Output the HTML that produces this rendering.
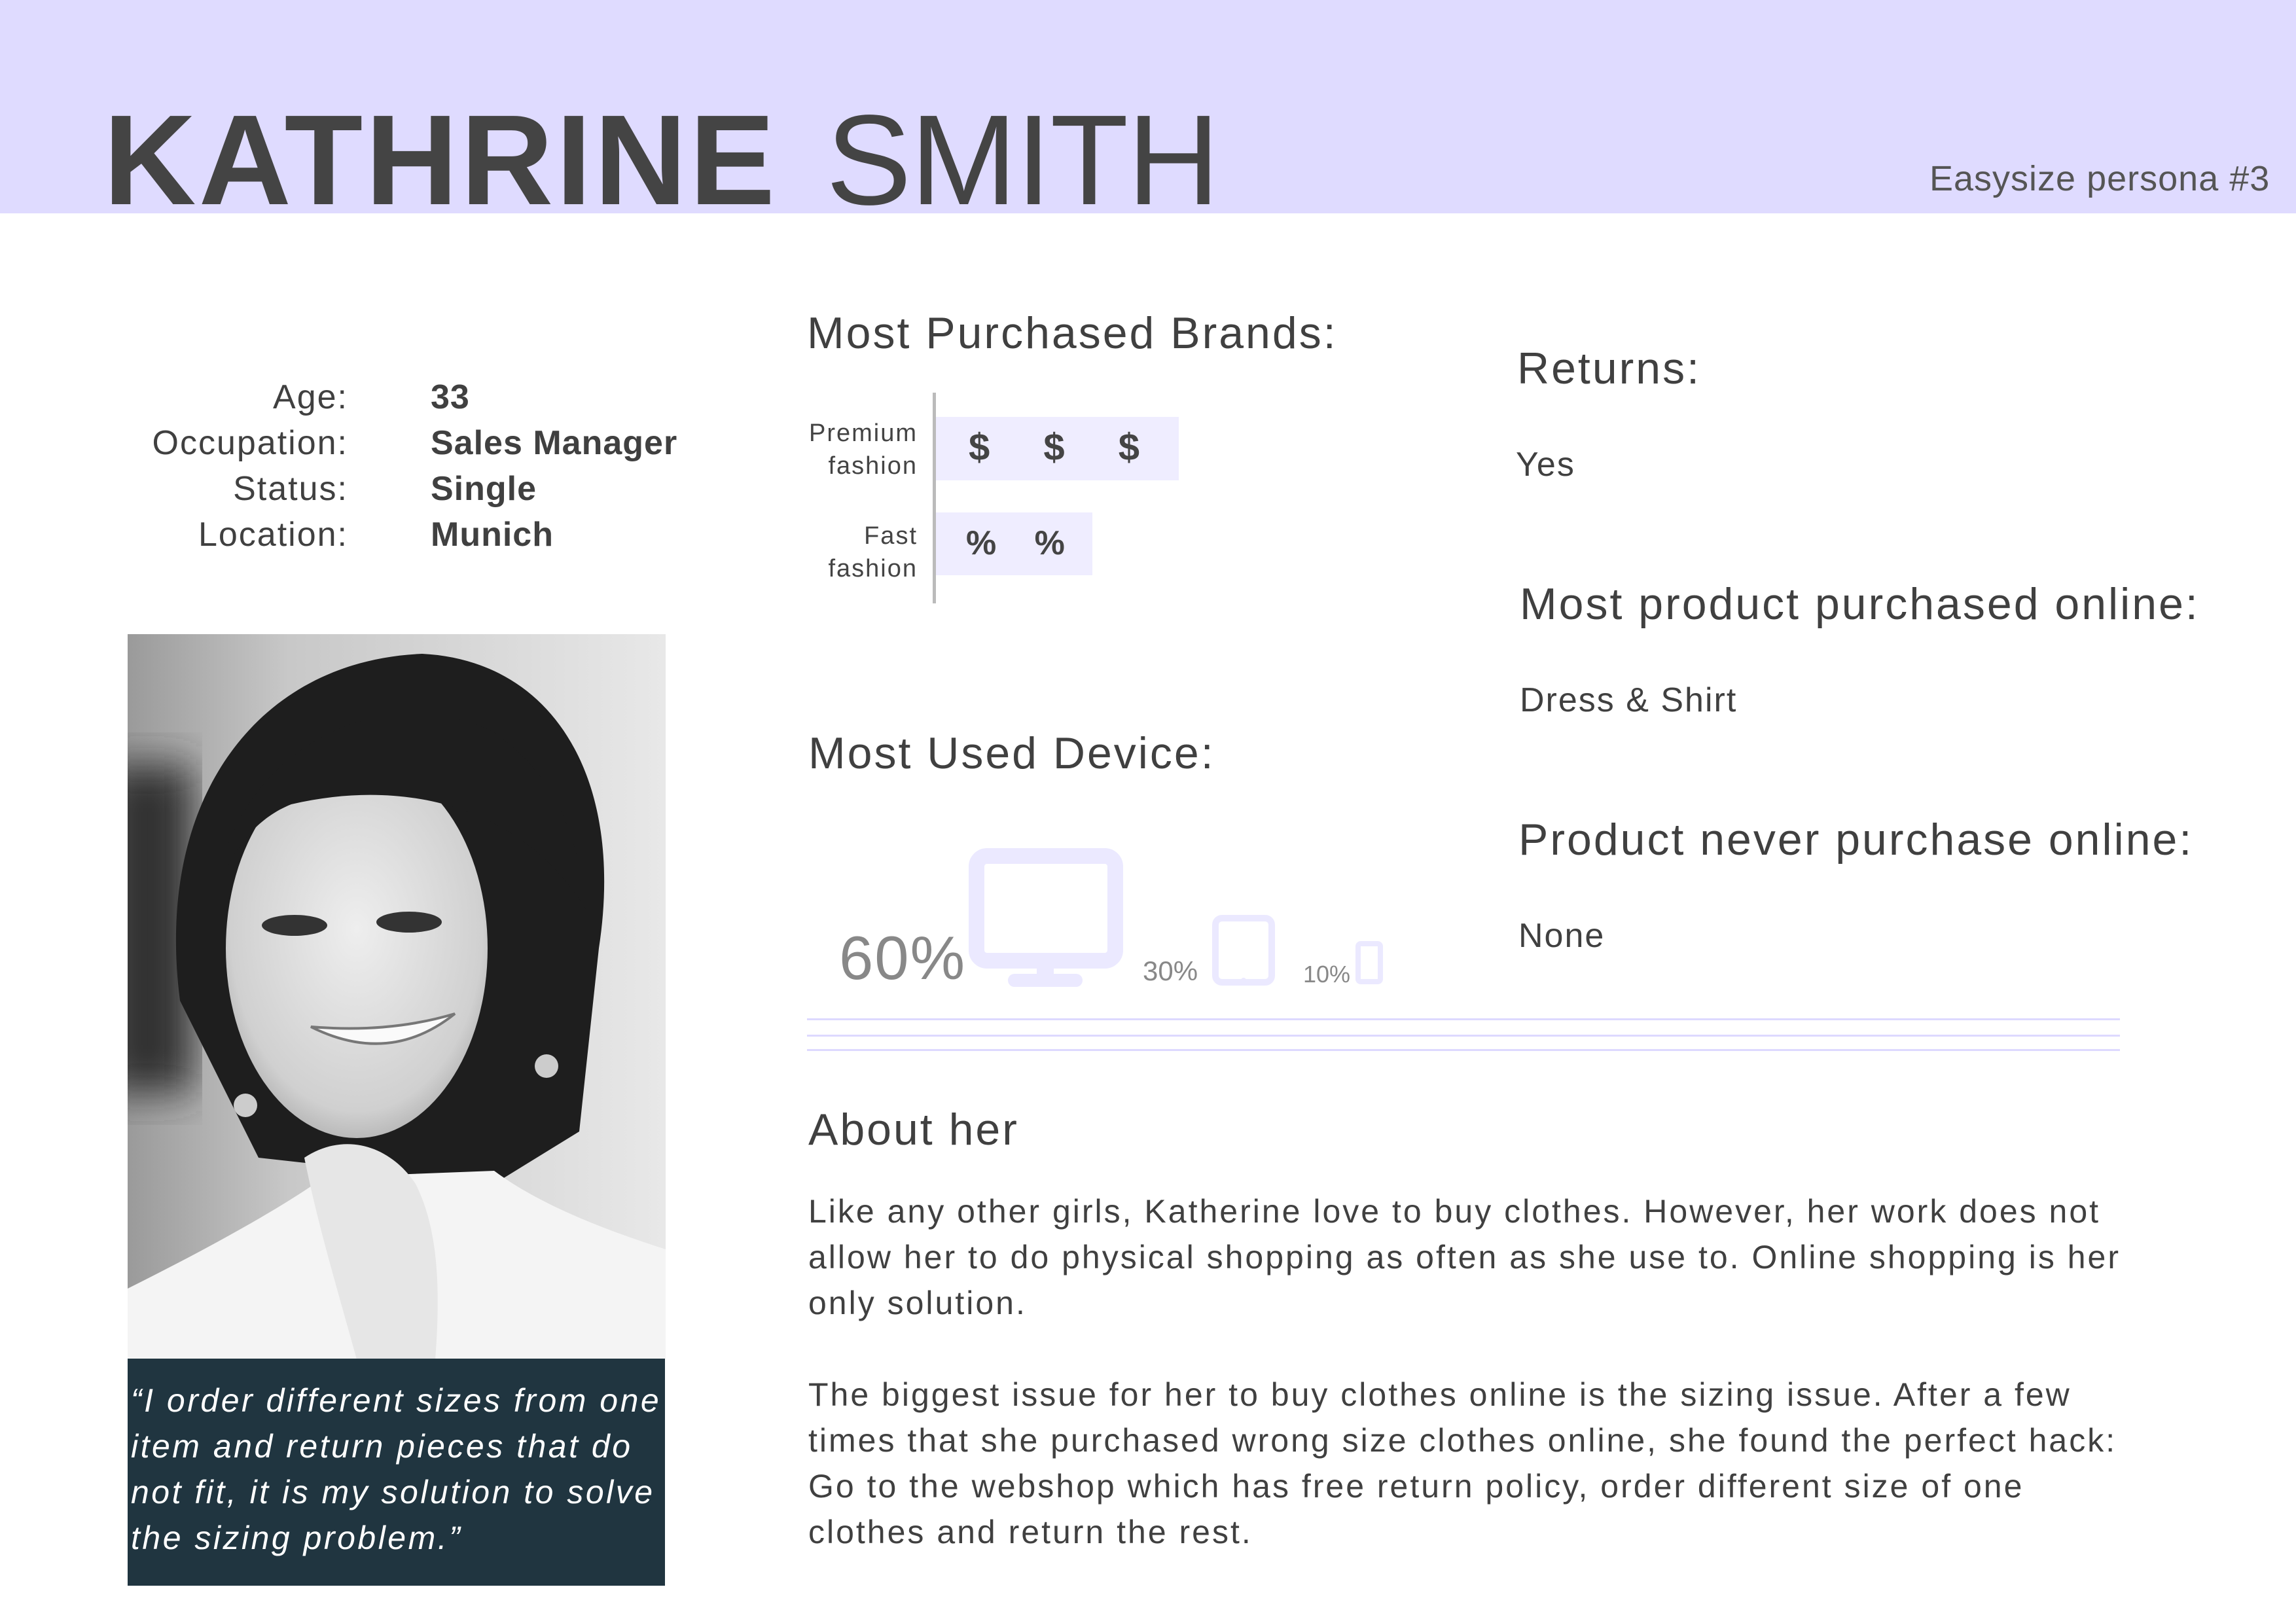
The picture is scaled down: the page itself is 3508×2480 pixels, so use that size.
<!DOCTYPE html>
<html><head><meta charset="utf-8"><style>
body{margin:0;width:3508px;height:2480px;background:#fff;position:relative;overflow:hidden;font-family:"Liberation Sans",sans-serif;color:#444}
.a{position:absolute;white-space:nowrap}
.h{font-size:68px;letter-spacing:3px;color:#404040}
.t{font-size:52px;letter-spacing:2px;color:#404040}
</style></head><body>
<div class="a" style="left:0;top:0;width:3508px;height:326px;background:#dfdbff"></div>
<div class="a" style="left:158px;top:145px;font-size:196px;font-weight:bold;letter-spacing:4px;line-height:200px;color:#444">KATHRINE</div>
<div class="a" style="left:1262px;top:145px;font-size:196px;line-height:200px;color:#444;letter-spacing:-2px">SMITH</div>
<div class="a" style="left:2948px;top:242px;font-size:54px;color:#555;letter-spacing:1px">Easysize persona #3</div>

<div class="a t" style="right:2976px;top:572px;text-align:right;line-height:70px">Age:<br>Occupation:<br>Status:<br>Location:</div>
<div class="a t" style="left:658px;top:572px;line-height:70px;font-weight:bold;letter-spacing:1px">33<br>Sales Manager<br>Single<br>Munich</div>

<svg class="a" style="left:195px;top:969px" width="822" height="1108" viewBox="0 0 822 1108">
<defs><linearGradient id="bg" x1="0" x2="1"><stop offset="0" stop-color="#9a9a9a"/><stop offset=".3" stop-color="#c8c8c8"/><stop offset="1" stop-color="#e8e8e8"/></linearGradient>
<radialGradient id="fc" cx=".5" cy=".45" r=".6"><stop offset="0" stop-color="#eeeeee"/><stop offset=".8" stop-color="#d0d0d0"/><stop offset="1" stop-color="#aaaaaa"/></radialGradient>
<filter id="bl"><feGaussianBlur stdDeviation="30"/></filter></defs>
<rect width="822" height="1108" fill="url(#bg)"/>
<rect x="-40" y="200" width="140" height="500" fill="#333" filter="url(#bl)"/>
<path d="M80 560 C40 250 200 40 450 30 C650 40 760 220 720 480 L690 760 L560 840 L200 800 Z" fill="#1e1e1e"/>
<ellipse cx="350" cy="480" rx="200" ry="290" fill="url(#fc)"/>
<path d="M150 330 C220 140 420 80 560 150 C660 220 690 320 700 420 C600 260 420 220 250 260 C200 280 170 320 150 360 Z" fill="#1e1e1e"/>
<path d="M0 1108 L0 1000 C120 940 230 880 300 830 L560 820 C640 880 760 920 822 940 L822 1108 Z" fill="#f4f4f4"/>
<path d="M270 800 C330 760 400 780 440 840 C470 900 480 980 470 1108 L350 1108 C320 1000 290 900 270 800Z" fill="#e6e6e6"/>
<ellipse cx="255" cy="445" rx="50" ry="16" fill="#333"/><ellipse cx="430" cy="440" rx="50" ry="16" fill="#333"/>
<path d="M280 600 Q400 660 500 580 Q400 610 280 600Z" fill="#fafafa" stroke="#777" stroke-width="4"/>
<circle cx="180" cy="720" r="18" fill="#ccc"/><circle cx="640" cy="660" r="18" fill="#ccc"/>
</svg>
<div class="a" style="left:195px;top:2076px;width:821px;height:347px;background:#203540"></div>
<div class="a" style="left:200px;top:2105px;font-size:50px;line-height:70px;font-style:italic;color:#fff;letter-spacing:3.5px">“I order different sizes from one<br>item and return pieces that do<br>not fit, it is my solution to solve<br>the sizing problem.”</div>

<div class="a h" style="left:1233px;top:470px">Most Purchased Brands:</div>
<div class="a" style="left:1425px;top:600px;width:5px;height:322px;background:#bbb"></div>
<div class="a" style="left:1430px;top:637px;width:371px;height:97px;background:#efedff"></div>
<div class="a" style="left:1430px;top:783px;width:239px;height:96px;background:#efedff"></div>
<div class="a" style="right:2106px;top:637px;text-align:right;font-size:38px;line-height:50px;color:#444;letter-spacing:2px">Premium<br>fashion</div>
<div class="a" style="right:2106px;top:794px;text-align:right;font-size:38px;line-height:50px;color:#444;letter-spacing:2px">Fast<br>fashion</div>
<div class="a" style="left:1480px;top:650px;font-size:58px;font-weight:bold;color:#444;word-spacing:66px">$ $ $</div>
<div class="a" style="left:1476px;top:800px;font-size:52px;font-weight:bold;color:#444;word-spacing:44px">% %</div>

<div class="a h" style="left:1235px;top:1112px">Most Used Device:</div>
<div class="a" style="left:1282px;top:1410px;font-size:94px;color:#888;letter-spacing:2px">60%</div>
<svg class="a" style="left:1480px;top:1296px" width="236" height="212" viewBox="0 0 236 212"><rect x="12" y="12" width="212" height="160" rx="16" fill="none" stroke="#ebe9ff" stroke-width="24"/><rect x="104" y="178" width="26" height="22" fill="#ebe9ff"/><rect x="60" y="192" width="114" height="20" rx="10" fill="#ebe9ff"/></svg>
<div class="a" style="left:1746px;top:1460px;font-size:42px;color:#888">30%</div>
<svg class="a" style="left:1852px;top:1398px" width="96" height="108"><rect x="5" y="5" width="86" height="98" rx="10" fill="none" stroke="#ebe9ff" stroke-width="10"/><circle cx="48" cy="100" r="4" fill="#ebe9ff"/></svg>
<div class="a" style="left:1991px;top:1468px;font-size:36px;color:#888">10%</div>
<svg class="a" style="left:2071px;top:1438px" width="42" height="66"><rect x="4" y="4" width="34" height="58" rx="4" fill="none" stroke="#ebe9ff" stroke-width="8"/></svg>
<div class="a" style="left:1233px;top:1556px;width:2006px;height:3px;background:#ddd9ff"></div>
<div class="a" style="left:1233px;top:1581px;width:2006px;height:3px;background:#ddd9ff"></div>
<div class="a" style="left:1233px;top:1603px;width:2006px;height:3px;background:#ddd9ff"></div>

<div class="a h" style="left:1235px;top:1687px">About her</div>
<div class="a" style="left:1235px;top:1816px;font-size:50px;line-height:70px;letter-spacing:3px;color:#404040">Like any other girls, Katherine love to buy clothes. However, her work does not<br>allow her to do physical shopping as often as she use to. Online shopping is her<br>only solution.<br><br>The biggest issue for her to buy clothes online is the sizing issue. After a few<br>times that she purchased wrong size clothes online, she found the perfect hack:<br>Go to the webshop which has free return policy, order different size of one<br>clothes and return the rest.</div>

<div class="a h" style="left:2318px;top:524px">Returns:</div>
<div class="a t" style="left:2316px;top:680px">Yes</div>
<div class="a h" style="left:2322px;top:884px">Most product purchased online:</div>
<div class="a t" style="left:2322px;top:1040px">Dress &amp; Shirt</div>
<div class="a h" style="left:2320px;top:1244px">Product never purchase online:</div>
<div class="a t" style="left:2320px;top:1400px">None</div>
</body></html>
